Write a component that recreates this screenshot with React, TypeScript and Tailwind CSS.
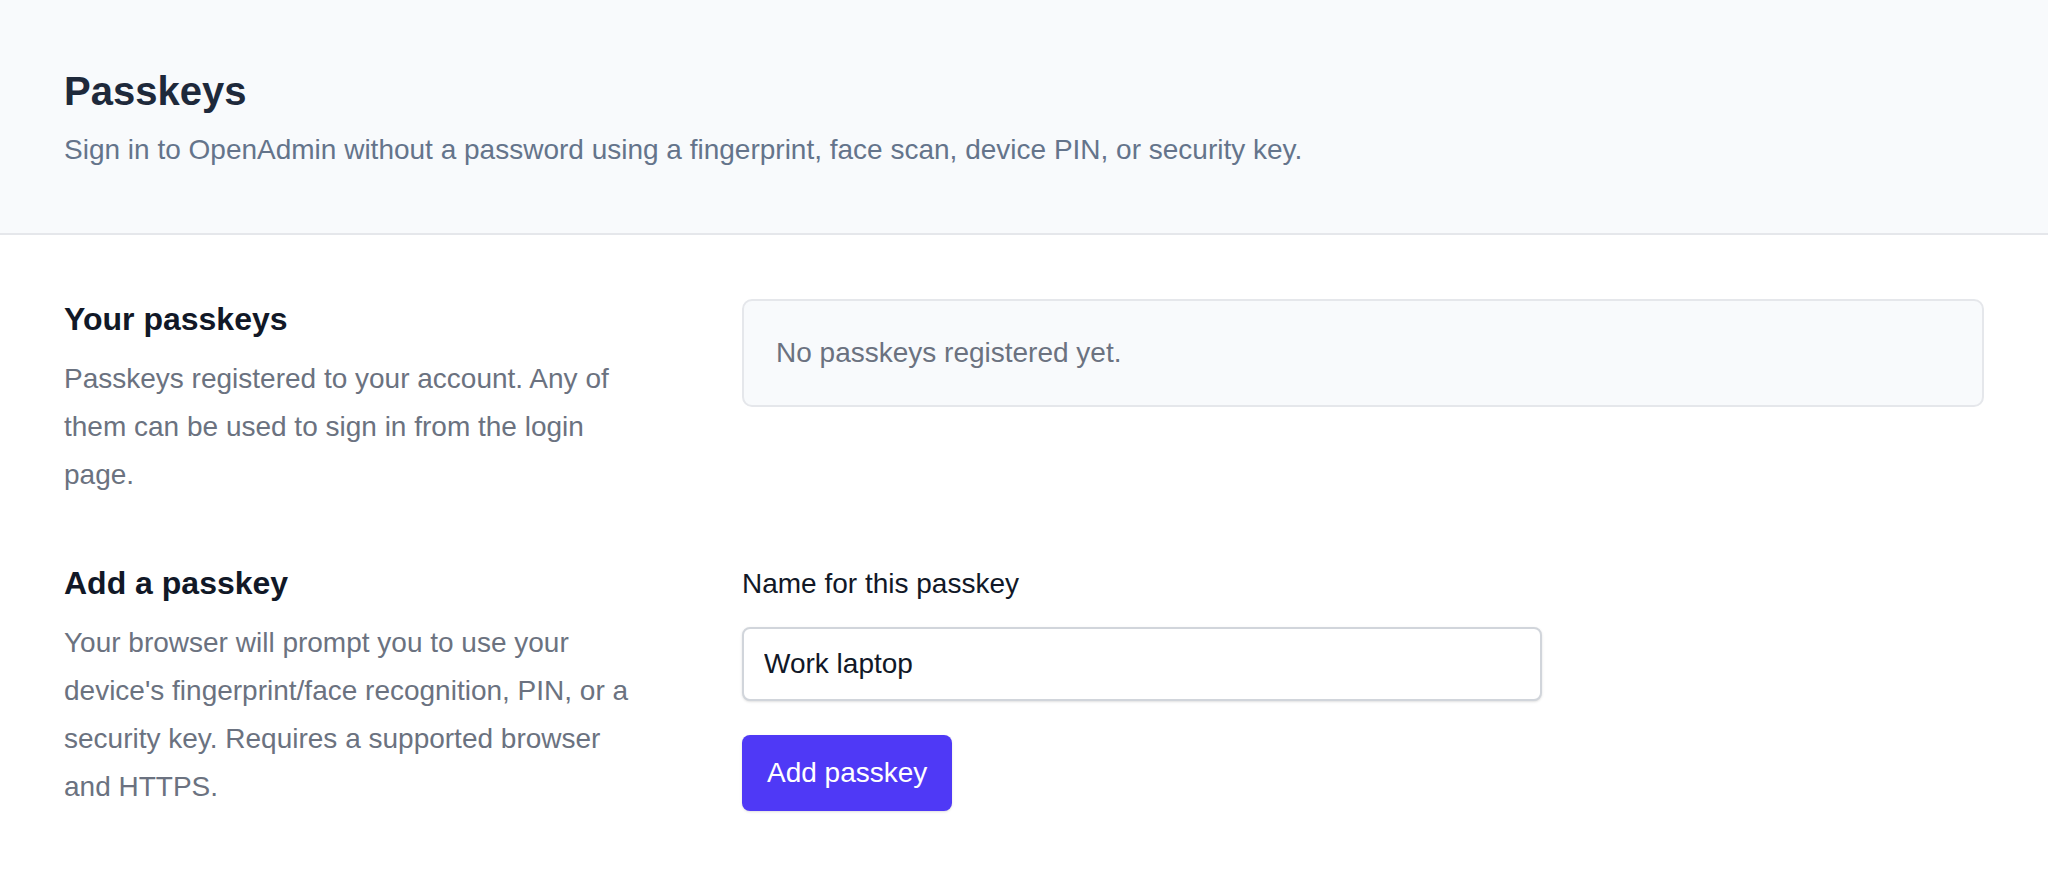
import { useState } from 'react';

const SANS = { fontFamily: '"Liberation Sans", Arial, sans-serif' };

function Section({
  title,
  description,
  children,
}: {
  title: string;
  description: string;
  children: React.ReactNode;
}) {
  return (
    <div className="grid grid-cols-[588px_1fr] gap-x-[90px]">
      <div>
        <h2 className="text-[32px] font-bold leading-[40px] text-[#111827]">{title}</h2>
        <p className="mt-4 text-[28px] leading-[48px] text-[#6b7280]">{description}</p>
      </div>
      <div>{children}</div>
    </div>
  );
}

export default function App() {
  const [name, setName] = useState('Work laptop');

  return (
    <div className="min-h-screen bg-white" style={SANS}>
      {/* Page header */}
      <header className="border-b-2 border-[#e5e7eb] bg-[#f8fafc] px-16 pb-[62px] pt-[67px]">
        <h1 className="text-[40px] font-bold leading-[48px] text-[#1e293b]">Passkeys</h1>
        <p className="mt-[14px] text-[28px] leading-[42px] text-[#64748b]">
          Sign in to OpenAdmin without a password using a fingerprint, face scan, device PIN, or security key.
        </p>
      </header>

      <main className="space-y-16 px-16 pt-[64px] pb-16">
        <Section
          title="Your passkeys"
          description="Passkeys registered to your account. Any of them can be used to sign in from the login page."
        >
          <div className="rounded-[10px] border-2 border-[#e5e7eb] bg-[#f8fafc] px-8 py-8">
            <p className="text-[28px] leading-[40px] text-[#6b7280]">No passkeys registered yet.</p>
          </div>
        </Section>

        <Section
          title="Add a passkey"
          description="Your browser will prompt you to use your device's fingerprint/face recognition, PIN, or a security key. Requires a supported browser and HTTPS."
        >
          <form className="max-w-[800px]" onSubmit={(e) => e.preventDefault()}>
            <label htmlFor="passkey-name" className="block text-[28px] leading-[42px] text-[#111827]">
              Name for this passkey
            </label>
            <input
              id="passkey-name"
              value={name}
              onChange={(e) => setName(e.target.value)}
              className="mt-[22px] block w-full rounded-[8px] border-2 border-[#d1d5db] bg-white px-5 py-[14px] text-[28px] leading-[42px] text-[#111827] shadow-sm outline-none"
            />
            <button
              type="submit"
              className="mt-[34px] rounded-[8px] bg-indigo-600 px-[25px] py-[17px] text-[28px] leading-[42px] text-white shadow-sm"
            >
              Add passkey
            </button>
          </form>
        </Section>
      </main>
    </div>
  );
}
